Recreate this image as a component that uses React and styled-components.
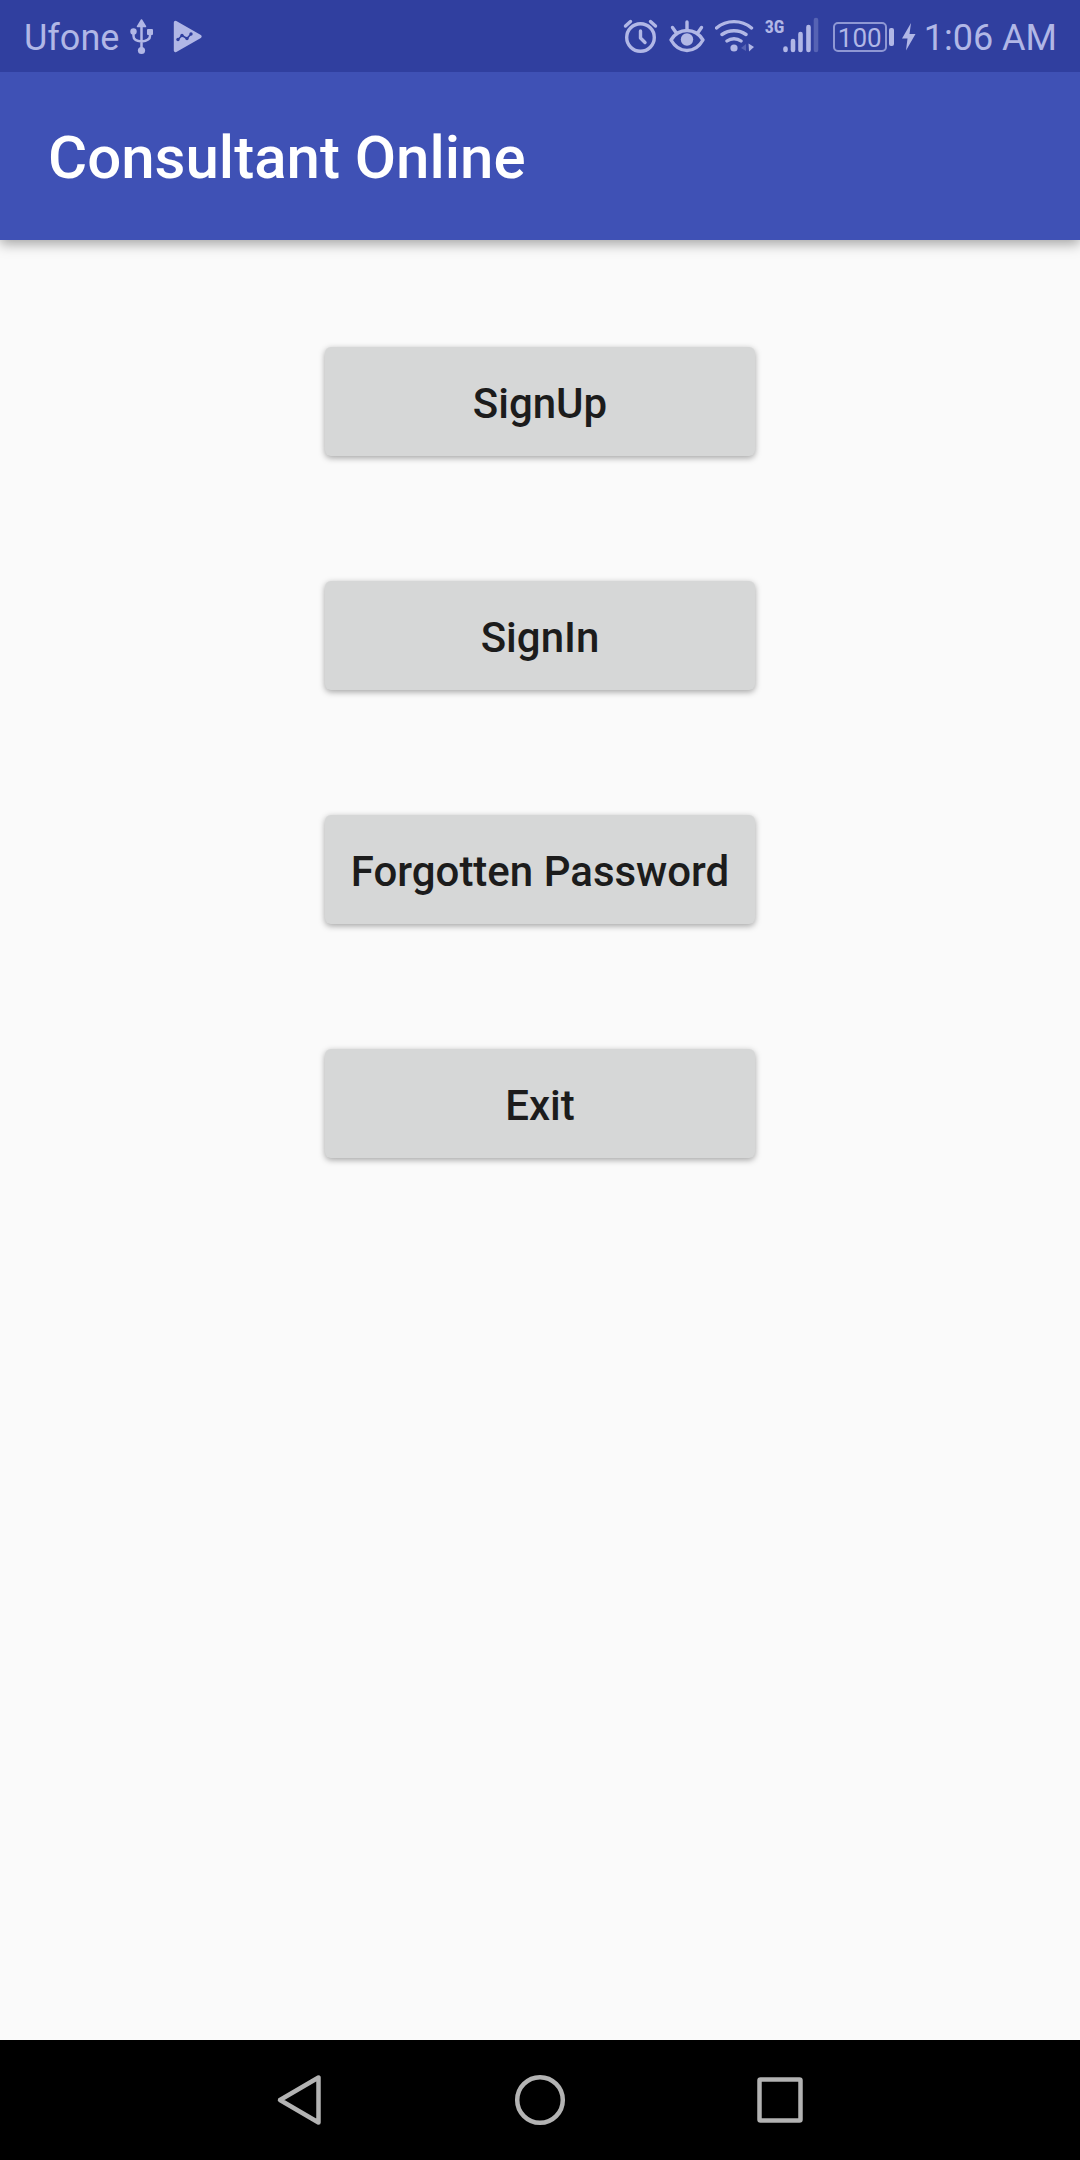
import React from "react";
import styled, { createGlobalStyle } from "styled-components";

const GlobalStyle = createGlobalStyle`
  *, *::before, *::after { box-sizing: border-box; }
  body {
    margin: 0;
    background: #fafafa;
    font-family: Roboto, "Noto Sans", sans-serif;
  }
`;

const Screen = styled.div`
  display: flex;
  flex-direction: column;
  min-height: 100vh;
  background: #fafafa;
`;

const StatusBar = styled.div`
  z-index: 2;
  display: flex;
  align-items: center;
  justify-content: space-between;
  height: 72px;
  padding: 2px 23px 0 24px;
  background: #303f9f;
  color: #b1b7e6;
  font-size: 36px;
  line-height: 44px;
`;

const StatusGroup = styled.div`
  display: flex;
  align-items: center;
  gap: 8px;
  white-space: nowrap;
`;

const StatusText = styled.span`
  padding-top: 2px;
`;

const StatusIcon = styled.svg`
  display: block;
  flex: none;
  width: ${(p) => p.$width}px;
  height: 40px;
  fill: none;
  stroke: currentColor;
  stroke-width: 3.4;
  stroke-linecap: round;
  stroke-linejoin: round;
`;

const Cellular = styled.div`
  display: flex;
  width: 62px;
  height: 40px;
`;

const NetworkType = styled.span`
  flex: none;
  width: 20px;
  padding-left: 2px;
  font-family: "Roboto Condensed", "Liberation Sans Narrow", Roboto, sans-serif;
  font-size: 18px;
  font-weight: 700;
  line-height: 20px;
`;

const Battery = styled.div`
  display: flex;
  align-items: center;
  gap: 2px;
`;

const BatteryBody = styled.span`
  width: 54px;
  height: 30px;
  border: 2px solid #8f98d4;
  border-radius: 5px;
  font-size: 26px;
  line-height: 28px;
  text-align: center;
`;

const BatteryTip = styled.span`
  width: 5px;
  height: 18px;
  border-radius: 2px;
  background: currentColor;
`;

const AppBar = styled.header`
  z-index: 1;
  display: flex;
  align-items: center;
  height: 168px;
  padding: 4px 48px 0;
  background: #3f51b5;
  box-shadow: 0 4px 12px rgba(0, 0, 0, 0.35);
`;

const Title = styled.h1`
  margin: 0;
  color: #fff;
  font-size: 60px;
  font-weight: 500;
  line-height: 72px;
`;

const Menu = styled.main`
  flex: 1;
  display: flex;
  flex-direction: column;
  align-items: center;
  gap: 125px;
  padding: 107px 48px;
`;

const MenuButton = styled.button`
  width: 430px;
  height: 109px;
  padding: 4px 20px 0;
  border: 0;
  border-radius: 6px;
  background: #d6d7d7;
  box-shadow: 0 2px 6px rgba(0, 0, 0, 0.35);
  color: #1c1c1c;
  font-family: inherit;
  font-size: 42px;
  font-weight: 500;
  line-height: 50px;
  white-space: nowrap;
  cursor: pointer;
`;

const NavBar = styled.nav`
  display: flex;
  justify-content: center;
  height: 120px;
  background: #000;
`;

const NavButton = styled.button`
  display: flex;
  align-items: center;
  justify-content: center;
  width: 240px;
  padding: 0;
  border: 0;
  background: none;
  color: #b3b3b3;
  cursor: pointer;
`;

const NavIcon = styled.svg`
  width: 56px;
  height: 56px;
  fill: none;
  stroke: currentColor;
  stroke-width: 4.5;
  stroke-linejoin: round;
`;

const actions = ["SignUp", "SignIn", "Forgotten Password", "Exit"];

function UsbIcon() {
  return (
    <StatusIcon $width={30} viewBox="128 17 30 40" aria-hidden="true">
      <path d="M142.500 26V50M134.500 31V36C134.500 39.500 137 41 142.500 41.500C148 41 151 39.500 151 36V31" strokeWidth="2.500" />
      <path d="M142.500 20L146.500 26.500H138.500Z" fill="currentColor" strokeWidth="1.500" />
      <circle cx="134.500" cy="31.500" r="3.200" fill="currentColor" stroke="none" />
      <rect x="148" y="29" width="6" height="6" rx="1" fill="currentColor" stroke="none" />
      <circle cx="142.500" cy="50.500" r="3.600" fill="currentColor" stroke="none" />
    </StatusIcon>
  );
}

function PlayIcon() {
  return (
    <StatusIcon $width={38} viewBox="165 17 38 40" aria-hidden="true">
      <path d="M175.500 22.500L200 36.500L175.500 50.500Z" fill="currentColor" />
      <g stroke="#303f9f" fill="#303f9f">
        <path d="M178 39.500L182 35.500L187 38.500L191 34" strokeWidth="1.600" fill="none" />
        <g stroke="none">
          <circle cx="178" cy="39.500" r="1.700" />
          <circle cx="182" cy="35.500" r="1.700" />
          <circle cx="187" cy="38.500" r="1.700" />
          <circle cx="191" cy="34" r="1.700" />
        </g>
      </g>
    </StatusIcon>
  );
}

function AlarmIcon() {
  return (
    <StatusIcon $width={36} viewBox="624 17 36 40" aria-hidden="true">
      <circle cx="641.500" cy="37.500" r="13.800" />
      <path d="M641.500 31V38L646 42.500" />
      <path d="M626.500 26L631.500 21.500M651.500 21.500L656.500 26" />
    </StatusIcon>
  );
}

function EyeIcon() {
  return (
    <StatusIcon $width={40} viewBox="668 17 40 40" aria-hidden="true">
      <path d="M672 40C676 33.500 681.500 30.500 688 30.500S700 33.500 704 40C700 47 695 50.500 688 50.500S676 47 672 40Z" />
      <circle cx="688" cy="39.500" r="6.200" fill="currentColor" stroke="none" />
      <path d="M688 22V29M673.500 27.500L677 32.500M702.500 27.500L699 32.500" />
    </StatusIcon>
  );
}

function WifiIcon() {
  return (
    <StatusIcon $width={40} viewBox="716 17 40 40" aria-hidden="true">
      <path d="M717.500 28C727.500 19.500 742.500 19.500 752.500 28M723 34.500C730 29.500 740 29.500 747 34.500M728 41C732 38 738 38 742 41" />
      <circle cx="735" cy="48" r="3.600" fill="currentColor" stroke="none" />
      <path d="M747 44V51L742 48Z" fill="currentColor" stroke="none" opacity="0.300" />
      <path d="M749.500 43.500L755 47L750 51.500Z" fill="currentColor" stroke="none" />
    </StatusIcon>
  );
}

function SignalIcon() {
  return (
    <StatusIcon $width={36} viewBox="783 17 36 40" aria-hidden="true">
      <g strokeWidth="4.600">
        <path d="M785.500 48.500V50M793 41V50M800.500 34V50M808.500 27V50" />
        <path d="M816 20V50" opacity="0.300" />
      </g>
    </StatusIcon>
  );
}

function BoltIcon() {
  return (
    <StatusIcon $width={14} viewBox="902 17 14 40" aria-hidden="true">
      <path d="M911 23L902 38.500H907.500L906 50.500L915.500 34H909.500Z" fill="currentColor" stroke="none" />
    </StatusIcon>
  );
}

export default function App() {
  return (
    <Screen>
      <GlobalStyle />
      <StatusBar>
        <StatusGroup>
          <StatusText>Ufone</StatusText>
          <UsbIcon />
          <PlayIcon />
        </StatusGroup>
        <StatusGroup>
          <AlarmIcon />
          <EyeIcon />
          <WifiIcon />
          <Cellular>
            <NetworkType>3G</NetworkType>
            <SignalIcon />
          </Cellular>
          <Battery>
            <BatteryBody>100</BatteryBody>
            <BatteryTip />
          </Battery>
          <BoltIcon />
          <StatusText>1:06 AM</StatusText>
        </StatusGroup>
      </StatusBar>
      <AppBar>
        <Title>Consultant Online</Title>
      </AppBar>
      <Menu>
        {actions.map((label) => (
          <MenuButton key={label} type="button">
            {label}
          </MenuButton>
        ))}
      </Menu>
      <NavBar aria-label="System">
        <NavButton type="button" aria-label="Back">
          <NavIcon viewBox="0 0 56 56">
            <path d="M8 28L46.500 5.500V50.500Z" />
          </NavIcon>
        </NavButton>
        <NavButton type="button" aria-label="Home">
          <NavIcon viewBox="0 0 56 56">
            <circle cx="28" cy="28" r="22.800" />
          </NavIcon>
        </NavButton>
        <NavButton type="button" aria-label="Recent apps">
          <NavIcon viewBox="0 0 56 56">
            <rect x="7.500" y="7.500" width="41" height="41" rx="1" />
          </NavIcon>
        </NavButton>
      </NavBar>
    </Screen>
  );
}
